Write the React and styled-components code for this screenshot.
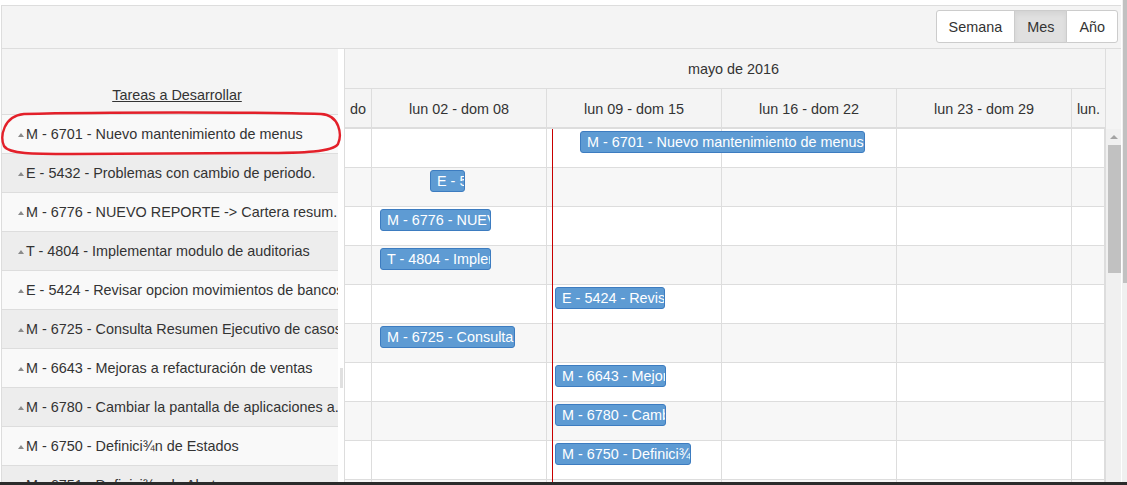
import React from 'react';
import styled, { createGlobalStyle } from 'styled-components';

const GlobalStyle = createGlobalStyle`
  html, body {
    margin: 0;
    padding: 0;
    background: #fff;
    overflow: hidden;
  }
  body {
    font-family: "Liberation Sans", Arial, sans-serif;
    font-size: 14.4px;
    color: #333;
  }
`;

const tasks = [
  { label: 'M - 6701 - Nuevo mantenimiento de menus', start: 235, width: 285 },
  { label: 'E - 5432 - Problemas con cambio de periodo.', start: 85, width: 35 },
  { label: 'M - 6776 - NUEVO REPORTE -> Cartera resum..', start: 35, width: 111 },
  { label: 'T - 4804 - Implementar modulo de auditorias', start: 35, width: 111 },
  { label: 'E - 5424 - Revisar opcion movimientos de bancos', start: 210, width: 110 },
  { label: 'M - 6725 - Consulta Resumen Ejecutivo de casos', start: 35, width: 135 },
  { label: 'M - 6643 - Mejoras a refacturación de ventas', start: 210, width: 111 },
  { label: 'M - 6780 - Cambiar la pantalla de aplicaciones a.', start: 210, width: 111 },
  { label: 'M - 6750 - Definici¾n de Estados', start: 210, width: 136 },
  { label: 'M - 6751 - Definici¾n de Alertas', start: 210, width: 135 },
];

const weeks = [
  { label: 'do', width: 27 },
  { label: 'lun 02 - dom 08', width: 175 },
  { label: 'lun 09 - dom 15', width: 175 },
  { label: 'lun 16 - dom 22', width: 175 },
  { label: 'lun 23 - dom 29', width: 175 },
  { label: 'lun.', width: 33 },
];

const Page = styled.div`
  width: 1127px;
  height: 485px;
  display: flex;
  flex-direction: column;
`;

const Main = styled.div`
  flex: 1;
  display: flex;
  min-height: 0;
`;

const Frame = styled.div`
  width: 1119px;
  margin: 5px 0 0 1px;
  border-top: 1px solid #ddd;
  border-left: 1px solid #ddd;
  background: #f4f4f4;
  display: flex;
  flex-direction: column;
  position: relative;
`;

const Toolbar = styled.div`
  height: 43px;
  flex-shrink: 0;
  box-sizing: border-box;
  border-bottom: 1px solid #ddd;
  display: flex;
  justify-content: flex-end;
  align-items: flex-start;
  padding: 4px 3px 0 0;
`;

const ButtonGroup = styled.div`
  display: flex;
`;

const ViewButton = styled.div`
  height: 33px;
  box-sizing: border-box;
  padding: 0 12px;
  display: flex;
  align-items: center;
  border: 1px solid #ccc;
  margin-left: -1px;
  background: ${(p) => (p.$active ? '#e0e0e0' : '#fff')};
  box-shadow: ${(p) => (p.$active ? 'inset 0 3px 5px rgba(0,0,0,0.06)' : 'none')};
  color: #333;
  &:first-child {
    border-radius: 3px 0 0 3px;
  }
  &:last-child {
    border-radius: 0 3px 3px 0;
  }
`;

const Body = styled.div`
  flex: 1;
  display: flex;
  min-height: 0;
  overflow: hidden;
`;

const TaskPanel = styled.div`
  width: 336px;
  display: flex;
  flex-direction: column;
  overflow: hidden;
  flex-shrink: 0;
`;

const TaskHeader = styled.div`
  height: 54px;
  flex-shrink: 0;
  border-bottom: 1px solid #ddd;
  display: flex;
  align-items: flex-end;
  justify-content: center;
  padding: 0 0 11px 14px;
  a {
    color: #333;
    text-decoration: underline;
  }
`;

const TaskRow = styled.div`
  height: 38px;
  border-bottom: 1px solid #ddd;
  background: ${(p) => (p.$alt ? '#ededed' : '#f9f9f9')};
  display: flex;
  align-items: center;
  padding-left: 15px;
  white-space: nowrap;
  flex-shrink: 0;
`;

const Caret = styled.span`
  width: 0;
  height: 0;
  border-left: 3px solid transparent;
  border-right: 3px solid transparent;
  border-bottom: 4px solid #8a8a8a;
  margin: 2px 2px 0 1px;
`;

const Splitter = styled.div`
  width: 6px;
  background: #fff;
  flex-shrink: 0;
  display: flex;
  justify-content: center;
  padding-top: 319px;
  box-sizing: border-box;
`;

const Grip = styled.div`
  width: 3px;
  height: 20px;
  margin-left: 1px;
  background: #e0e0e0;
`;

const Timeline = styled.div`
  width: 760px;
  border-left: 1px solid #ddd;
  border-right: 1px solid #ddd;
  display: flex;
  flex-direction: column;
  flex-shrink: 0;
  overflow: hidden;
  position: relative;
`;

const MonthRow = styled.div`
  height: 39px;
  border-bottom: 1px solid #ddd;
  display: flex;
  padding-left: 1px;
  overflow: hidden;
  flex-shrink: 0;
`;

const MonthCell = styled.div`
  width: 775px;
  flex-shrink: 0;
  display: flex;
  align-items: center;
  justify-content: center;
`;

const WeekRow = styled.div`
  height: 38px;
  border-bottom: 2px solid #ddd;
  display: flex;
  flex-shrink: 0;
  padding-top: 2px;
  box-sizing: border-box;
  height: 40px;
`;

const WeekCell = styled.div`
  width: ${(p) => p.$w}px;
  flex-shrink: 0;
  box-sizing: border-box;
  border-right: 1px solid #ddd;
  margin-top: -2px;
  padding-top: 2px;
  display: flex;
  align-items: center;
  justify-content: center;
  white-space: nowrap;
  overflow: hidden;
  &:last-child {
    border-right: none;
  }
`;

const GridBody = styled.div`
  position: relative;
  flex: 1;
`;

const GridRow = styled.div`
  height: 38px;
  border-bottom: 1px solid #ddd;
  background: ${(p) => (p.$alt ? '#f7f7f7' : '#fff')};
  display: flex;
  position: relative;
`;

const GridCell = styled.div`
  width: ${(p) => p.$w}px;
  flex-shrink: 0;
  box-sizing: border-box;
  border-right: 1px solid #ddd;
  &:last-child {
    border-right: none;
  }
`;

const Bar = styled.div`
  position: absolute;
  top: 2px;
  height: 22px;
  box-sizing: border-box;
  background: #5e9bd3;
  border: 1px solid #3d7cc0;
  border-radius: 3px;
  color: #fff;
  line-height: 20px;
  padding-left: 6px;
  white-space: nowrap;
  overflow: hidden;
`;

const TodayLine = styled.div`
  position: absolute;
  top: 0;
  bottom: 0;
  left: 207px;
  width: 1px;
  background: #c80000;
`;

const ScrollColumn = styled.div`
  flex: 1;
  display: flex;
  flex-direction: column;
`;

const ScrollHead = styled.div`
  height: 80px;
  flex-shrink: 0;
`;

const ScrollTrack = styled.div`
  flex: 1;
  background: #f0f0f0;
  display: flex;
  flex-direction: column;
  align-items: center;
  padding-top: 6px;
`;

const ScrollArrow = styled.div`
  width: 0;
  height: 0;
  border-left: 4px solid transparent;
  border-right: 4px solid transparent;
  border-bottom: 4px solid #a3a3a3;
  margin-left: 1px;
`;

const ScrollThumb = styled.div`
  width: 13px;
  height: 128px;
  margin: 6px 0 0 1px;
  background: #c1c1c1;
`;

const PageScroll = styled.div`
  flex: 1;
  background: #f0f0f0;
  border-left: 1px solid #fff;
  display: flex;
  flex-direction: column;
`;

const PageThumb = styled.div`
  height: 283px;
  margin-left: 1px;
  background: #c1c1c1;
`;

const BottomEdge = styled.div`
  height: 3px;
  background: #2b2b2b;
`;

const Highlight = styled.svg`
  position: absolute;
  left: -2px;
  top: 105px;
  pointer-events: none;
`;

export default function App() {
  return (
    <>
      <GlobalStyle />
      <Page>
        <Main>
          <Frame>
            <Toolbar>
              <ButtonGroup>
                <ViewButton>Semana</ViewButton>
                <ViewButton $active>Mes</ViewButton>
                <ViewButton>Año</ViewButton>
              </ButtonGroup>
            </Toolbar>
            <Body>
              <TaskPanel>
                <TaskHeader>
                  <a>Tareas a Desarrollar</a>
                </TaskHeader>
                {tasks.map((t, i) => (
                  <TaskRow key={i} $alt={i % 2 === 1}>
                    <Caret />
                    {t.label}
                  </TaskRow>
                ))}
              </TaskPanel>
              <Splitter>
                <Grip />
              </Splitter>
              <Timeline>
                <MonthRow>
                  <MonthCell>mayo de 2016</MonthCell>
                </MonthRow>
                <WeekRow>
                  {weeks.map((w) => (
                    <WeekCell key={w.label} $w={w.width}>{w.label}</WeekCell>
                  ))}
                </WeekRow>
                <GridBody>
                  {tasks.map((t, i) => (
                    <GridRow key={i} $alt={i % 2 === 1}>
                      {weeks.map((w) => (
                        <GridCell key={w.label} $w={w.width} />
                      ))}
                      <Bar style={{ left: t.start, width: t.width }}>{t.label}</Bar>
                    </GridRow>
                  ))}
                  <TodayLine />
                </GridBody>
              </Timeline>
              <ScrollColumn>
                <ScrollHead />
                <ScrollTrack>
                  <ScrollArrow />
                  <ScrollThumb />
                </ScrollTrack>
              </ScrollColumn>
            </Body>
            <Highlight width="344" height="46" viewBox="0 0 344 46">
              <path
                d="M24 3 C 100 1, 262 1, 321 3 C 340 4, 342 24, 338 33 C 333 41, 303 42, 262 42 L 72 43 C 32 43, 9 43, 4 35 C 0 26, 3 5, 24 3 Z"
                fill="none"
                stroke="#e3202a"
                strokeWidth="2.4"
              />
            </Highlight>
          </Frame>
          <PageScroll>
            <PageThumb />
          </PageScroll>
        </Main>
        <BottomEdge />
      </Page>
    </>
  );
}
